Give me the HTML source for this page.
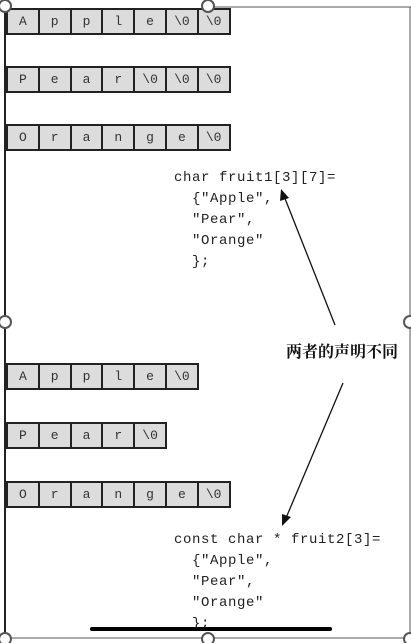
<!DOCTYPE html>
<html><head><meta charset="utf-8"><style>
html,body{margin:0;padding:0;background:#fff;width:411px;height:643px;overflow:hidden;position:relative}
.row{position:absolute;left:6px;display:flex;border:2px solid #222;background:#222;gap:2px;height:23px}
.row span{width:29.8px;background:#dcdcdc;font:13px "Liberation Mono",monospace;color:#333;display:flex;align-items:center;justify-content:center}
.code{position:absolute;left:174px;font:14px/21px "Liberation Mono",monospace;letter-spacing:0.6px;color:#222;white-space:pre}
.lbl{position:absolute;left:286px;top:339px;font:bold 16px "Liberation Serif","Noto Serif CJK SC",serif;color:#111}
</style></head><body>
<div class="row" style="top:8px"><span>A</span><span>p</span><span>p</span><span>l</span><span>e</span><span>\0</span><span>\0</span></div>
<div class="row" style="top:66px"><span>P</span><span>e</span><span>a</span><span>r</span><span>\0</span><span>\0</span><span>\0</span></div>
<div class="row" style="top:124px"><span>O</span><span>r</span><span>a</span><span>n</span><span>g</span><span>e</span><span>\0</span></div>
<div class="row" style="top:363px"><span>A</span><span>p</span><span>p</span><span>l</span><span>e</span><span>\0</span></div>
<div class="row" style="top:422px"><span>P</span><span>e</span><span>a</span><span>r</span><span>\0</span></div>
<div class="row" style="top:481px"><span>O</span><span>r</span><span>a</span><span>n</span><span>g</span><span>e</span><span>\0</span></div>
<div class="code" style="top:168px">char fruit1[3][7]=
  {"Apple",
  "Pear",
  "Orange"
  };</div>
<div class="code" style="top:530px">const char * fruit2[3]=
  {"Apple",
  "Pear",
  "Orange"
  };</div>
<div class="lbl">两者的声明不同</div>
<svg width="411" height="643" style="position:absolute;left:0;top:0">
<line x1="5" y1="0" x2="5" y2="643" stroke="#222" stroke-width="2"/>
<line x1="208" y1="7" x2="411" y2="7" stroke="#555" stroke-width="1"/>
<line x1="410" y1="7" x2="410" y2="643" stroke="#555" stroke-width="1"/>
<line x1="5" y1="638" x2="411" y2="638" stroke="#555" stroke-width="1"/>
<line x1="335" y1="325" x2="284" y2="196" stroke="#111" stroke-width="1.3"/>
<polygon points="281,189 280,201 289,198" fill="#111"/>
<line x1="343" y1="383" x2="286" y2="518" stroke="#111" stroke-width="1.3"/>
<polygon points="282,526 282,514 291,517" fill="#111"/>
<rect x="90" y="627" width="242" height="4" rx="2" fill="#000"/>
<g fill="#fff" stroke="#555" stroke-width="2">
<circle cx="5" cy="6" r="6"/><circle cx="208" cy="6" r="6"/>
<circle cx="5" cy="322" r="6"/><circle cx="410" cy="322" r="6"/>
<circle cx="5" cy="639" r="6"/><circle cx="208" cy="639" r="6"/><circle cx="410" cy="639" r="6"/>
</g>
</svg>
</body></html>
